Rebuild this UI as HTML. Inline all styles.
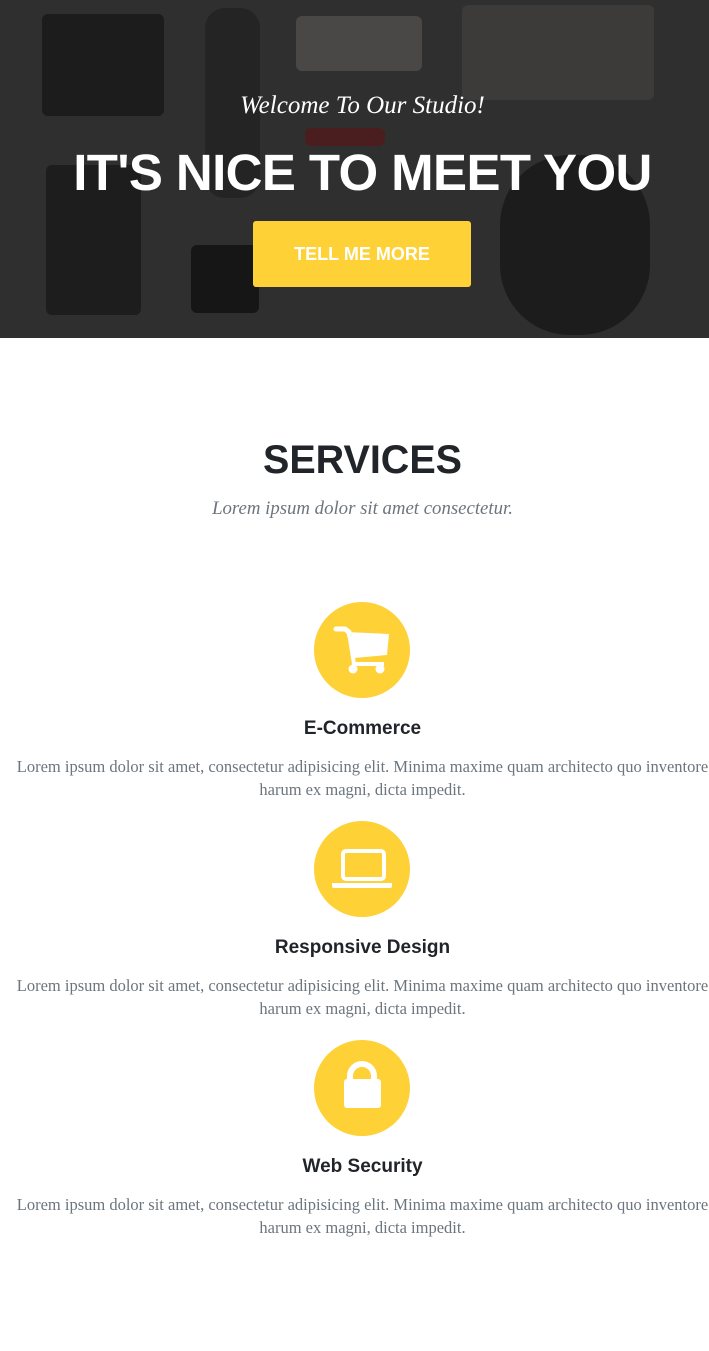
<!DOCTYPE html>
<html><head><meta charset="utf-8"><style>
*{margin:0;padding:0;box-sizing:border-box}
body{width:709px;height:1351px;background:#fff;overflow:hidden;position:relative;font-family:"Liberation Sans",sans-serif}
header{position:absolute;left:0;top:0;width:709px;height:338px;background:#302f2f;overflow:hidden}
.o{position:absolute;border-radius:6px}
.abs{position:absolute;left:8px;width:709px;text-align:center;white-space:nowrap}
.welcome{top:92px;font-family:"Liberation Serif",serif;font-style:italic;font-size:25px;color:#fff}
.big{top:143px;font-weight:bold;font-size:51px;color:#fff;letter-spacing:-0.6px}
.btn{position:absolute;left:253px;top:221px;width:218px;height:66px;background:#fed136;border-radius:3px;color:#fff;font-weight:bold;font-size:18px;line-height:66px;text-align:center}
.sub{top:498px;font-family:"Liberation Serif",serif;font-style:italic;font-size:18.8px;color:#6c757d}
.c{position:absolute;left:314px;width:96px;height:96px;border-radius:50%;background:#fed136}
.c svg{position:absolute;left:0;top:0}
.t{font-size:19px;font-weight:bold;color:#212529}
.p{font-family:"Liberation Serif",serif;font-size:16.5px;line-height:23px;color:#6c757d}
</style></head><body>
<header>
<div class="o" style="left:42px;top:14px;width:122px;height:102px;background:#1c1c1d"></div>
<div class="o" style="left:205px;top:8px;width:55px;height:190px;background:#242425;border-radius:20px"></div>
<div class="o" style="left:296px;top:16px;width:126px;height:55px;background:#4a4847"></div>
<div class="o" style="left:462px;top:5px;width:192px;height:95px;background:#3d3b3a"></div>
<div class="o" style="left:46px;top:165px;width:95px;height:150px;background:#1d1d1e"></div>
<div class="o" style="left:191px;top:245px;width:68px;height:68px;background:#161617"></div>
<div class="o" style="left:305px;top:128px;width:80px;height:18px;background:#4a1e1e"></div>
<div class="o" style="left:500px;top:155px;width:150px;height:180px;background:#1c1c1d;border-radius:70px"></div>
<div class="abs welcome">Welcome To Our Studio!</div>
<div class="abs big">IT'S NICE TO MEET YOU</div>
<div class="btn">TELL ME MORE</div>
</header>
<div class="abs" style="top:438px;font-size:39.5px;font-weight:bold;color:#212529">SERVICES</div>
<div class="abs sub">Lorem ipsum dolor sit amet consectetur.</div>

<div class="c" style="top:602px"><svg width="96" height="96" viewBox="0 0 96 96">
<path d="M22 27h9l4 3" stroke="#fff" stroke-width="5" fill="none" stroke-linecap="round"/>
<path d="M32 30L75 32L73 53L40 56Z" fill="#fff"/>
<path d="M35 31L40 62H70" stroke="#fff" stroke-width="4" fill="none"/>
<circle cx="39" cy="67" r="4.5" fill="#fff"/><circle cx="66" cy="67" r="4.5" fill="#fff"/></svg></div>
<div class="abs t" style="top:718px">E-Commerce</div>
<div class="abs p" style="top:755px">Lorem ipsum dolor sit amet, consectetur adipisicing elit. Minima maxime quam architecto quo inventore<br>harum ex magni, dicta impedit.</div>

<div class="c" style="top:821px"><svg width="96" height="96" viewBox="0 0 96 96">
<rect x="29" y="30" width="41" height="28" rx="3" stroke="#fff" stroke-width="4" fill="none"/>
<path d="M18 62H78V65Q78 67 76 67H20Q18 67 18 65Z" fill="#fff"/></svg></div>
<div class="abs t" style="top:937px">Responsive Design</div>
<div class="abs p" style="top:974px">Lorem ipsum dolor sit amet, consectetur adipisicing elit. Minima maxime quam architecto quo inventore<br>harum ex magni, dicta impedit.</div>

<div class="c" style="top:1040px"><svg width="96" height="96" viewBox="0 0 96 96">
<path d="M36 41V36A12 12 0 0 1 60 36V41" stroke="#fff" stroke-width="6" fill="none"/>
<rect x="30" y="39" width="37" height="29" rx="3" fill="#fff"/></svg></div>
<div class="abs t" style="top:1156px">Web Security</div>
<div class="abs p" style="top:1193px">Lorem ipsum dolor sit amet, consectetur adipisicing elit. Minima maxime quam architecto quo inventore<br>harum ex magni, dicta impedit.</div>
</body></html>
